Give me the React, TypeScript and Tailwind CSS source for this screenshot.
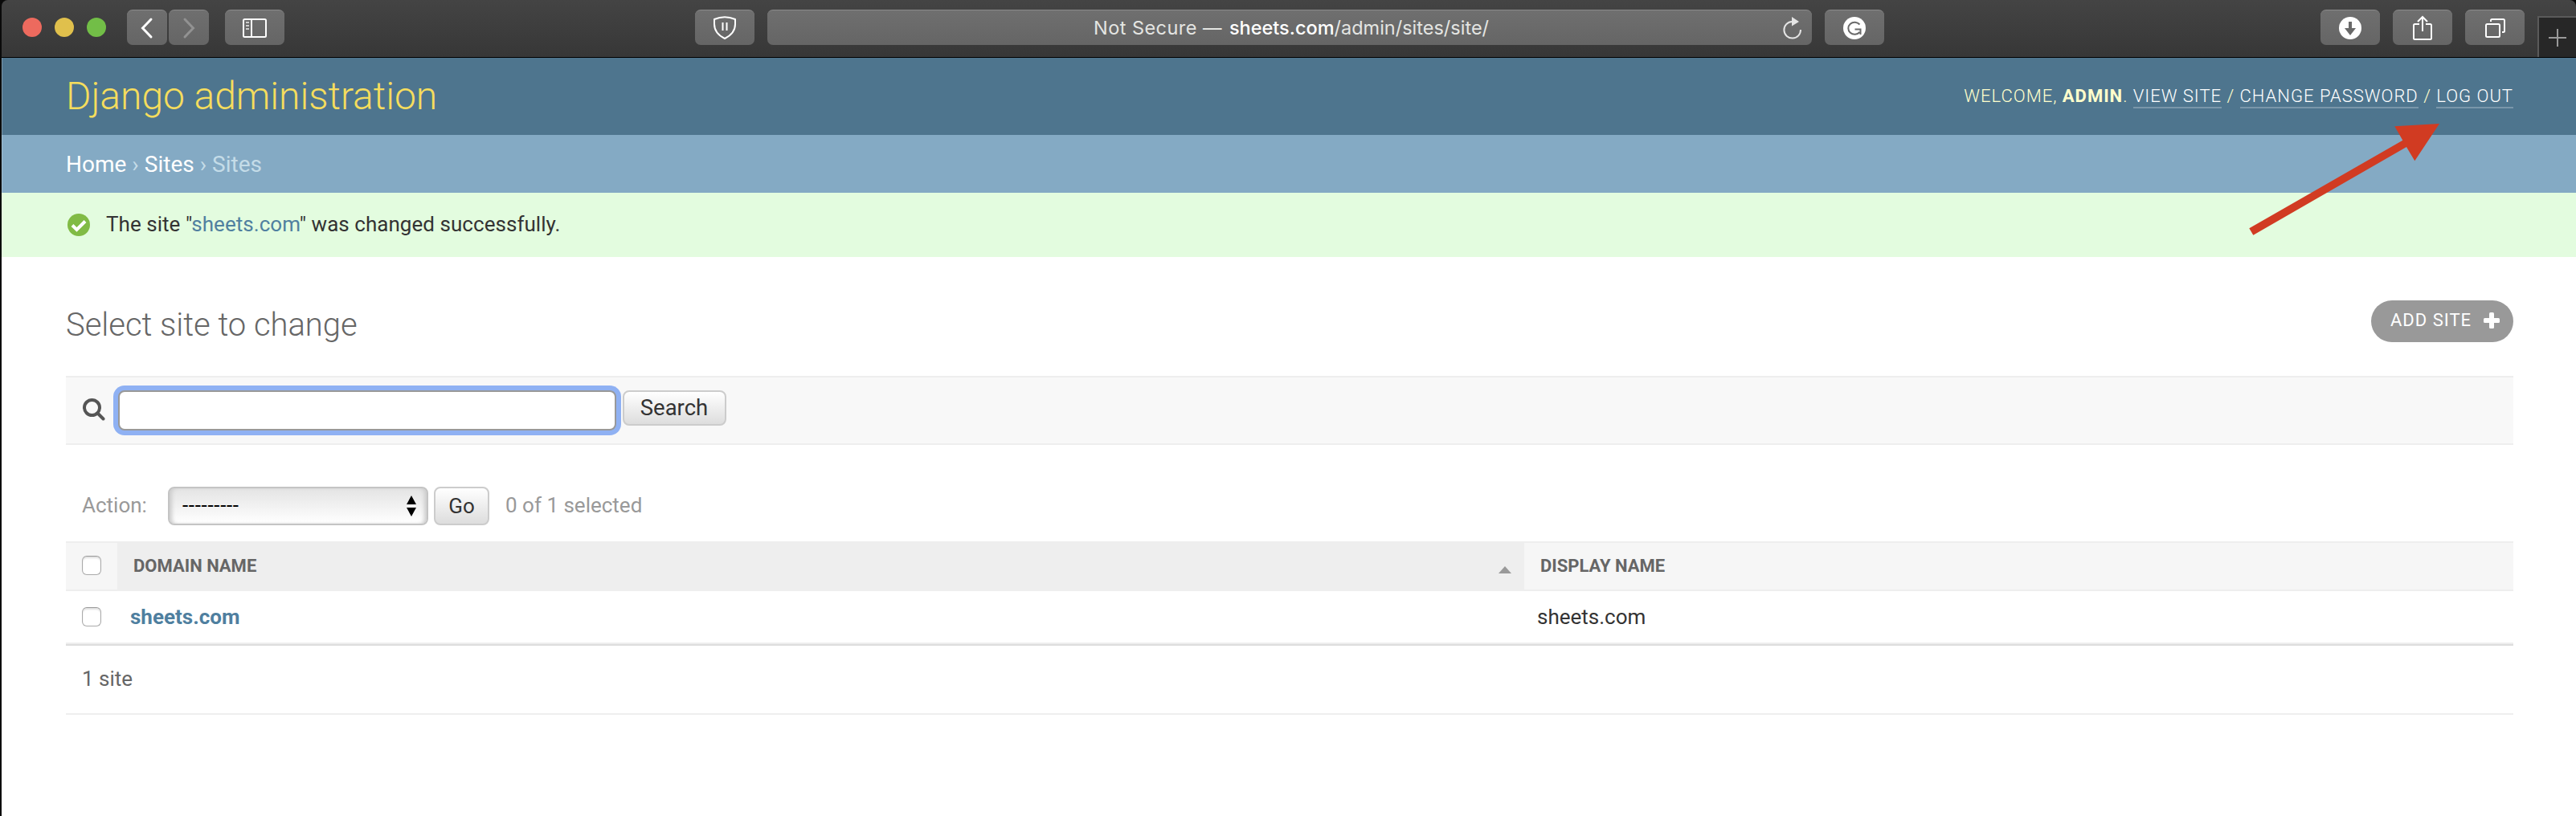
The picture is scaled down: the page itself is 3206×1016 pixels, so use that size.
import React from "react";

const btn =
  "flex h-11 shrink-0 items-center justify-center rounded-[7px] border-t border-[#8a8a8a] bg-linear-to-b from-[#6f6f6f] to-[#656565]";
const tool = "border-b-2 border-white/25 text-white pb-[1px]";

function Toolbar() {
  return (
    <div className="flex h-[72px] rounded-t-lg border-b border-black bg-linear-to-b from-[#444444] to-[#373737]">
      <div className="flex h-11 w-full pt-3">
        <div className="ml-[26px] flex h-11 shrink-0 items-center gap-4">
          <i className="size-6 rounded-full bg-[#ed6a5e]" />
          <i className="size-6 rounded-full bg-[#e0c04c]" />
          <i className="size-6 rounded-full bg-[#72be47]" />
        </div>
        <div className={btn + " ml-[26px] w-[50px]"}>
          <svg width="50" height="44" viewBox="0 0 50 44" fill="none" stroke="#fff" strokeWidth="3" strokeLinecap="round">
            <path d="M30 11 19.500 22 30 33" />
          </svg>
        </div>
        <div className={btn + " ml-[2px] w-[50px]"}>
          <svg width="50" height="44" viewBox="0 0 50 44" fill="none" stroke="#929292" strokeWidth="3" strokeLinecap="round">
            <path d="M20 11 30.500 22 20 33" />
          </svg>
        </div>
        <div className={btn + " ml-5 w-[74px]"}>
          <svg width="30" height="24" viewBox="0 0 30 24" fill="none" stroke="#fff" strokeWidth="2">
            <rect x="1" y="1" width="28" height="22" rx="1.500" />
            <path d="M11 1V23" />
            <path d="M4 5H8M4 9H8M4 13H8" stroke="#ccc" />
          </svg>
        </div>
        <div className={btn + " ml-[511px] w-[74px]"}>
          <svg width="28" height="29" viewBox="0 0 28 29" fill="none" stroke="#fff" strokeWidth="2">
            <path d="M1 4C9 .500 19 .500 27 4V10C27 18 22 24 14 28 6 24 1 18 1 10Z" strokeLinejoin="round" />
            <path d="M11.500 8V18M16.500 8V18" />
          </svg>
        </div>
        <div className={btn + " ml-4 w-[1300px] pl-[406px] pr-3"}>
          <div className="flex-1 whitespace-pre pt-[1px] font-[Inter,sans-serif] text-[23.500px] text-[#e4e5e2]">
            <span className="mr-[2px] tracking-[0.45px]">Not Secure — </span>
            <span className="font-medium text-white">sheets.com</span>/admin/sites/site/
          </div>
          <svg width="24" height="28" viewBox="0 0 24 28" fill="none">
            <path d="M11 6A10.300 10.300 0 1 0 22 16" stroke="#e4e4e4" strokeWidth="2" />
            <path d="M11 0V11.500L20 6Z" fill="#e4e4e4" />
          </svg>
        </div>
        <div className={btn + " ml-4 w-[74px]"}>
          <svg width="28" height="28" viewBox="0 0 28 28" fill="none">
            <circle cx="14" cy="14" r="14" fill="#fff" />
            <path d="M20.500 9.500A8 7.500 0 1 0 20.500 19M14.500 15.500H21.500V22" stroke="#696969" strokeWidth="2" />
          </svg>
        </div>
        <div className={btn + " ml-[543px] w-[74px]"}>
          <svg width="28" height="28" viewBox="0 0 28 28">
            <circle cx="14" cy="14" r="14" fill="#fff" />
            <path d="M12 6H16V14H21L14 23 7 14H12Z" fill="#696969" />
          </svg>
        </div>
        <div className={btn + " ml-4 w-[74px]"}>
          <svg width="24" height="32" viewBox="0 0 24 32" fill="none" stroke="#fff" strokeWidth="2">
            <path d="M8 11H2.500Q1 11 1 12.500V28.500Q1 30 2.500 30H21.500Q23 30 23 28.500V12.500Q23 11 21.500 11H16M12 20V2M6 8 12 2 18 8" />
          </svg>
        </div>
        <div className={btn + " ml-4 w-[74px]"}>
          <svg width="26" height="24" viewBox="0 0 26 24" fill="none" stroke="#fff" strokeWidth="2">
            <rect x="2" y="7" width="17" height="16" rx="1.500" />
            <path d="M8 4V2.500Q8 1 9.500 1H23.500Q25 1 25 2.500V15.500Q25 17 23.500 17H22" />
          </svg>
        </div>
        <div className="ml-4 mt-2 flex h-[51px] flex-1 items-center justify-center border-l-2 border-t-2 border-[#5a5a5a] bg-[#272727]">
          <svg width="22" height="22" viewBox="0 0 22 22" stroke="#999" strokeWidth="2">
            <path d="M11 0V22M0 11H22" />
          </svg>
        </div>
      </div>
    </div>
  );
}

function Checkbox() {
  return <span className="block size-6 rounded-[6px] border border-[#aaa] border-t-[#999] bg-white shadow-[inset_0_2px_2px_rgba(0,0,0,0.12)]" />;
}

export default function App() {
  return (
    <div className="h-[1016px] w-[3206px] overflow-hidden bg-[#0a0a0a] pl-[2px] font-[Roboto,sans-serif] text-[26px] leading-[30px] text-[#333]">
      <Toolbar />
      <header className="flex h-24 items-center justify-between border-l border-[#7b98aa] bg-[#4e758e] pl-[79px] pr-[78px]">
        <h1 className="pb-[1px] text-[48px] font-light leading-[56px] tracking-[-0.04px] text-[#f5dd5d]">Django administration</h1>
        <div className="whitespace-pre text-[22px] font-light leading-[26px] tracking-[1px] text-[#ffffcc]">
          WELCOME, <b className="font-bold">ADMIN</b>. <span className={tool}>VIEW SITE</span> / <span className={tool}>CHANGE PASSWORD</span> / <span className={tool}>LOG OUT</span>
        </div>
      </header>
      <nav className="flex h-[72px] items-center gap-[7px] border-l border-[#a1bfd2] bg-[#84aac4] pl-[79px] pt-[2px] text-[28px] leading-8 text-[#c4dce8]">
        <span className="text-white">Home</span>
        <span>›</span>
        <span className="text-white">Sites</span>
        <span>›</span>
        <span>Sites</span>
      </nav>
      <div className="flex h-20 items-center bg-[#e3fcdf] pl-[82px]">
        <svg width="28" height="28" viewBox="0 0 28 28" className="mr-5">
          <circle cx="14" cy="14" r="14" fill="#81bb45" />
          <path d="M6 14.500 11.500 20 22 9.500" fill="none" stroke="#fff" strokeWidth="4" />
        </svg>
        <span className="pb-[3px] tracking-[0.04px]">
          The site "<span className="text-[#5080a0]">sheets.com</span>" was changed successfully.
        </span>
      </div>
      <main className="h-[696px] bg-white pl-20 pr-[78px] pt-[54px]">
        <div className="flex h-[94px] items-start justify-between">
          <h2 className="mt-[7px] text-[40px] font-light leading-[47px] tracking-[-0.04px] text-[#666]">Select site to change</h2>
          <a className="flex h-[52px] w-[177px] items-center rounded-full bg-[#999] pl-6 text-[22px] tracking-[1px] text-white">
            <span className="flex-1 pb-[2px]">ADD SITE</span>
            <svg width="20" height="20" viewBox="0 0 20 20" className="mr-[17px] mt-[-2px]" fill="#fff">
              <rect x="7" width="6" height="20" rx="1.500" />
              <rect y="7" width="20" height="6" rx="1.500" />
            </svg>
          </a>
        </div>
        <div className="flex h-[86px] items-start border-y-2 border-[#eee] bg-[#f8f8f8] pl-[21px] pt-4">
          <svg width="28" height="28" viewBox="0 0 28 28" fill="none" stroke="#555" strokeLinecap="round" className="mt-[10px]">
            <circle cx="11.500" cy="11.500" r="9.500" strokeWidth="4" />
            <path d="M19 19 25.500 25.500" strokeWidth="4" />
          </svg>
          <input className="ml-4 h-[50px] w-[620px] rounded-lg border-2 border-[#999] bg-white shadow-[0_0_0_6px_#8fb1f3] outline-none" />
          <button className="ml-2 h-11 w-[129px] rounded-lg border-2 border-[#ccc] bg-linear-to-b from-white to-[#ddd] pr-[1px] text-[27.500px] leading-[40px]">Search</button>
        </div>
        <div className="flex h-[120px] items-start pl-5 pt-[52px] leading-12 text-[#999]">
          <span className="w-[107px] leading-[46px]">Action:</span>
          <div className="flex h-12 w-[324px] items-center rounded-lg border-2 border-[#c4c4c4] bg-linear-to-b from-[#e4e4e4] to-white pl-4 pr-[13px] text-black shadow-[inset_-5px_0_5px_-2px_#ccc,inset_5px_0_5px_-2px_#ccc]">
            <span className="flex-1 pb-[2px] text-[26px] leading-none tracking-[0.670px]">---------</span>
            <svg width="12" height="26" viewBox="0 0 12 26">
              <path d="M6 0 12 11H0ZM0 15H12L6 26Z" />
            </svg>
          </div>
          <button className="ml-[7px] h-12 w-[69px] rounded-lg border-2 border-[#ccc] bg-linear-to-b from-white to-[#ddd] leading-11 text-[#333]">Go</button>
          <span className="ml-[20px] leading-[46px]">0 of 1 selected</span>
        </div>
        <div className="grid h-[62px] grid-cols-[64px_1751px_1fr] border-y-2 border-[#eee] bg-[#f6f6f6] text-[22px] font-bold leading-[58px] text-[#666]">
          <div className="flex items-center pb-[2px] pl-5"><Checkbox /></div>
          <div className="flex justify-between bg-[#eee] pl-5 pr-4">
            <span>DOMAIN NAME</span>
            <svg width="16" height="9" viewBox="0 0 16 9" className="mt-[29px]"><path d="M8 0 16 9H0Z" fill="#999" /></svg>
          </div>
          <div className="pl-5">DISPLAY NAME</div>
        </div>
        <div className="grid h-[66px] grid-cols-[64px_1751px_1fr] border-b-2 border-[#eee] leading-[64px]">
          <div className="flex items-center pl-5"><Checkbox /></div>
          <div className="pl-4 font-bold text-[#4f7f9f]">sheets.com</div>
          <div className="pl-4">sheets.com</div>
        </div>
        <div className="h-[88px] border-b-2 border-t-2 border-b-[#eee] border-t-[#ddd] pl-5 leading-[82px] text-[#666]">1 site</div>
      </main>
      <svg width="240" height="142" viewBox="0 0 240 142" className="absolute left-[2798px] top-[152px]">
        <path d="M1.300 132.300 6.300 140.700 197 31 207.300 48.300 238 2 182.300 5.300 192.300 22.700Z" fill="#d13b22" />
      </svg>
    </div>
  );
}
